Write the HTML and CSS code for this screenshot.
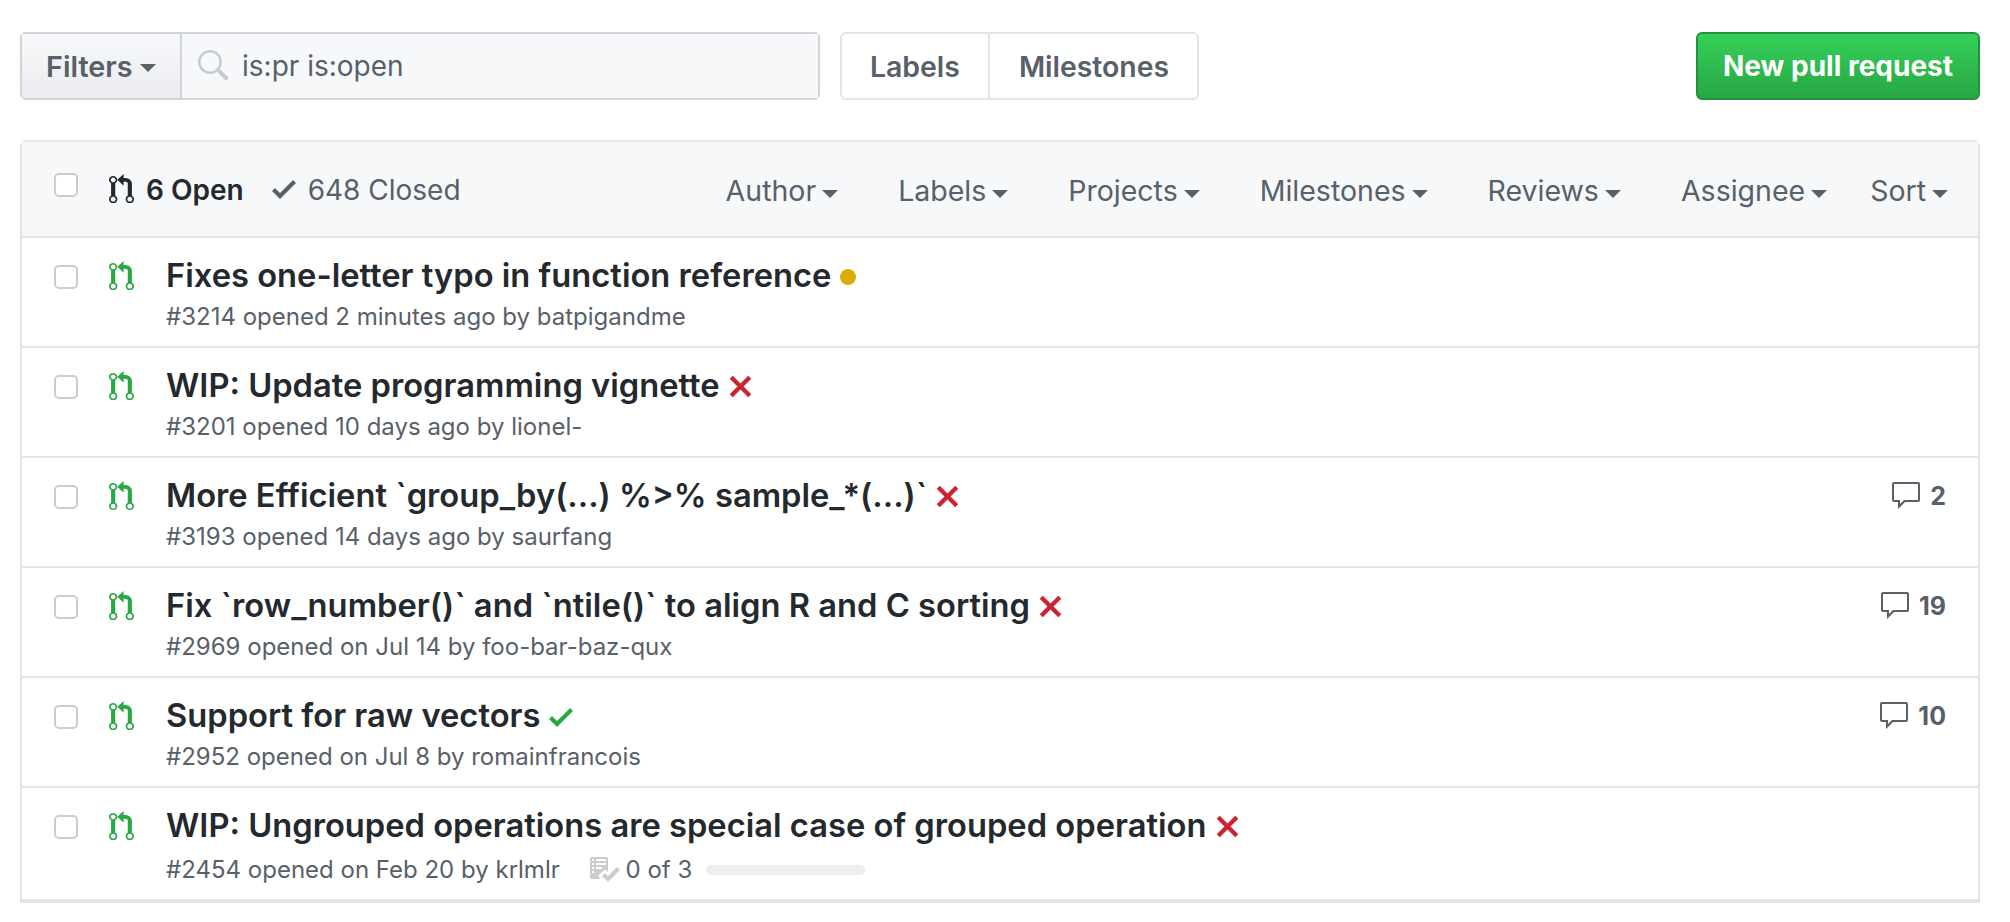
FILE: index.html
```html
<!DOCTYPE html>
<html>
  <head>
    <title>Pull requests</title>
    <link rel="stylesheet" href="styles.css">
  </head>
  <body>
    <svg class="defs" width="0" height="0">
      <symbol id="i-pr" viewBox="0 0 12 16" preserveAspectRatio="none"><path d="M11 11.28V5c-.03-.78-.34-1.47-.94-2.06C9.46 2.35 8.78 2.03 8 2H7V0L4 3l3 3V4h1c.27.02.48.11.69.31.21.2.3.42.31.69v6.28A1.993 1.993 0 0 0 10 15a1.993 1.993 0 0 0 1-3.72zm-1 2.92c-.66 0-1.2-.55-1.2-1.2 0-.65.55-1.2 1.2-1.2.65 0 1.2.55 1.2 1.2 0 .65-.55 1.2-1.2 1.2zM4 3c0-1.11-.89-2-2-2a1.993 1.993 0 0 0-1 3.72v6.56A1.993 1.993 0 0 0 2 15a1.993 1.993 0 0 0 1-3.72V4.72c.59-.34 1-.98 1-1.72zm-.8 10c0 .66-.55 1.2-1.2 1.2-.65 0-1.2-.55-1.2-1.2 0-.65.55-1.2 1.2-1.2.65 0 1.2.55 1.2 1.2zM2 4.2C1.34 4.2.8 3.65.8 3c0-.65.55-1.2 1.2-1.2.65 0 1.2.55 1.2 1.2 0 .65-.55 1.2-1.2 1.2z"/></symbol>
      <symbol id="i-check" viewBox="0 0 12 16"><path d="M12 5l-8 8-4-4 1.5-1.5L4 10l6.5-6.5L12 5z"/></symbol>
      <symbol id="i-x" viewBox="0 0 12 16"><path d="M7.48 8l3.75 3.75-1.48 1.48L6 9.48l-3.75 3.75-1.48-1.48L4.52 8 .77 4.25l1.48-1.48L6 6.52l3.75-3.75 1.48 1.48L7.48 8z"/></symbol>
      <symbol id="i-comment" viewBox="0 0 16 16"><path d="M14 1H2c-.55 0-1 .45-1 1v8c0 .55.45 1 1 1h2v3.5L7.5 11H14c.55 0 1-.45 1-1V2c0-.55-.45-1-1-1zm0 9H7l-2 2v-2H2V2h12v8z"/></symbol>
      <symbol id="i-search" viewBox="0 0 16 16"><path d="M15.7 13.3l-3.81-3.83A5.93 5.93 0 0 0 13 6c0-3.31-2.69-6-6-6S1 2.69 1 6s2.69 6 6 6c1.3 0 2.48-.41 3.47-1.11l3.83 3.81c.19.2.45.3.7.3.25 0 .52-.09.7-.3a.996.996 0 0 0 0-1.41v.01zM7 10.7c-2.59 0-4.7-2.11-4.7-4.7 0-2.59 2.11-4.7 4.7-4.7 2.59 0 4.7 2.11 4.7 4.7 0 2.59-2.11 4.7-4.7 4.7z"/></symbol>
      <symbol id="i-checklist" viewBox="0 0 16 16"><path d="M16 8.5l-6 6-3-3L8.5 10l1.5 1.5L14.5 7 16 8.5zM5.7 12.2l.8.8H2c-.55 0-1-.45-1-1V3c0-.55.45-1 1-1h7c.55 0 1 .45 1 1v6.5l-.8-.8c-.39-.39-1.03-.39-1.42 0L5.7 10.8a.996.996 0 0 0 0 1.41v-.01zM4 4h5V3H4v1zm0 2h5V5H4v1zm0 2h3V7H4v1zM3 9H2v1h1V9zm0-2H2v1h1V7zm0-2H2v1h1V5zm0-2H2v1h1V3z"/></symbol>
    </svg>

    <div class="topbar">
      <div class="search-group">
        <div class="filters">Filters<span class="caret"></span></div>
        <div class="search">
          <svg class="search-icon"><use href="#i-search"/></svg>
          <span>is:pr is:open</span>
        </div>
      </div>
      <div class="nav-links">
        <a class="labels-link">Labels</a>
        <a class="milestones-link">Milestones</a>
      </div>
      <a class="new-pr">New pull request</a>
    </div>

    <div class="box">
      <div class="box-header">
        <span class="checkbox head-check"></span>
        <svg class="pr-icon dark"><use href="#i-pr"/></svg>
        <span class="open-count">6 Open</span>
        <svg class="closed-icon"><use href="#i-check"/></svg>
        <span class="closed-count">648 Closed</span>
        <div class="menus">
          <span class="menu">Author<span class="caret"></span></span>
          <span class="menu">Labels<span class="caret"></span></span>
          <span class="menu">Projects<span class="caret"></span></span>
          <span class="menu">Milestones<span class="caret"></span></span>
          <span class="menu">Reviews<span class="caret"></span></span>
          <span class="menu">Assignee<span class="caret"></span></span>
          <span class="menu sort">Sort<span class="caret"></span></span>
        </div>
      </div>

      <div class="row">
        <span class="checkbox"></span>
        <svg class="pr-icon"><use href="#i-pr"/></svg>
        <div class="row-main">
          <div class="row-title">Fixes one-letter typo in function reference <span class="dot"></span></div>
          <div class="row-meta">#3214 opened 2 minutes ago by batpigandme</div>
        </div>
      </div>

      <div class="row">
        <span class="checkbox"></span>
        <svg class="pr-icon"><use href="#i-pr"/></svg>
        <div class="row-main">
          <div class="row-title">WIP: Update programming vignette <svg class="status red"><use href="#i-x"/></svg></div>
          <div class="row-meta">#3201 opened 10 days ago by lionel-</div>
        </div>
      </div>

      <div class="row">
        <span class="checkbox"></span>
        <svg class="pr-icon"><use href="#i-pr"/></svg>
        <div class="row-main">
          <div class="row-title">More Efficient `group_by(...) %&gt;% sample_*(...)` <svg class="status red"><use href="#i-x"/></svg></div>
          <div class="row-meta">#3193 opened 14 days ago by saurfang</div>
        </div>
        <div class="comments"><svg class="comment-icon"><use href="#i-comment"/></svg>2</div>
      </div>

      <div class="row">
        <span class="checkbox"></span>
        <svg class="pr-icon"><use href="#i-pr"/></svg>
        <div class="row-main">
          <div class="row-title">Fix `row_number()` and `ntile()` to align R and C sorting <svg class="status red"><use href="#i-x"/></svg></div>
          <div class="row-meta">#2969 opened on Jul 14 by foo-bar-baz-qux</div>
        </div>
        <div class="comments"><svg class="comment-icon"><use href="#i-comment"/></svg>19</div>
      </div>

      <div class="row">
        <span class="checkbox"></span>
        <svg class="pr-icon"><use href="#i-pr"/></svg>
        <div class="row-main">
          <div class="row-title">Support for raw vectors <svg class="status green"><use href="#i-check"/></svg></div>
          <div class="row-meta">#2952 opened on Jul 8 by romainfrancois</div>
        </div>
        <div class="comments"><svg class="comment-icon"><use href="#i-comment"/></svg>10</div>
      </div>

      <div class="row">
        <span class="checkbox"></span>
        <svg class="pr-icon"><use href="#i-pr"/></svg>
        <div class="row-main">
          <div class="row-title">WIP: Ungrouped operations are special case of grouped operation <svg class="status red"><use href="#i-x"/></svg></div>
          <div class="row-meta">#2454 opened on Feb 20 by krlmlr
            <span class="tasks"><svg class="task-icon"><use href="#i-checklist"/></svg>0 of 3<span class="task-bar"></span></span>
          </div>
        </div>
      </div>
    </div>
  </body>
</html>
```

FILE: styles.css
```css
html, body {
  height: 100%;
}
body {
  font-family: Inter, "Noto Sans", sans-serif;
  margin: 0;
  padding: 32px 30px 0 20px;
  background: #fff;
  color: #24292e;
  box-sizing: border-box;
  overflow: hidden;
}
.defs {
  position: absolute;
}
.caret {
  display: inline-block;
  margin-left: 6px;
  border: 8px solid transparent;
  border-top-color: currentColor;
  border-bottom: 0;
  vertical-align: 3px;
}

/* top bar */
.topbar {
  display: flex;
  height: 68px;
  font-size: 28.4px;
}
.search-group {
  display: flex;
  width: 800px;
  border: 2px solid #d1d5da;
  border-radius: 6px;
  box-sizing: border-box;
}
.filters {
  display: flex;
  align-items: center;
  width: 160px;
  box-sizing: border-box;
  padding-left: 24px;
  font-size: 28.8px;
  font-weight: 600;
  color: #586069;
  background: linear-gradient(#f6f8fa, #eaecef);
  border-right: 2px solid #d1d5da;
}
.filters .caret {
  margin-top: 3px;
  margin-left: 7px;
  vertical-align: middle;
}
.search {
  flex: 1;
  display: flex;
  align-items: center;
  background: #f6f8fa;
  font-size: 28px;
  color: #586069;
}
.search-icon {
  width: 32px;
  height: 32px;
  margin: 0 14px;
  fill: #c6cbd1;
}
.nav-links {
  display: flex;
  margin-left: 20px;
  border: 2px solid #e1e4e8;
  border-radius: 6px;
  font-weight: 600;
  color: #586069;
}
.nav-links a {
  display: flex;
  align-items: center;
}
.labels-link {
  padding: 0 28px;
  border-right: 2px solid #e1e4e8;
}
.milestones-link {
  padding: 0 28px 0 29px;
}
.new-pr {
  display: flex;
  align-items: center;
  justify-content: center;
  margin-left: auto;
  width: 284px;
  box-sizing: border-box;
  border: 2px solid #23913c;
  border-radius: 6px;
  background: linear-gradient(#34d058, #28a745);
  color: #fff;
  font-size: 28px;
  font-weight: 700;
}

/* issue box */
.box {
  margin-top: 40px;
  border: 2px solid #e1e4e8;
  border-radius: 6px 6px 0 0;
}
.box-header {
  display: flex;
  align-items: center;
  height: 94px;
  background: #f6f8fa;
  border-bottom: 2px solid #e1e4e8;
  font-size: 28px;
  color: #586069;
}
.box-header > span:not(.checkbox), .menus {
  padding-top: 2px;
}
.checkbox {
  flex: none;
  width: 24px;
  height: 24px;
  margin-left: 32px;
  box-sizing: border-box;
  border: 2px solid #c9ccd0;
  border-radius: 5px;
  background: #fff;
}
.head-check {
  margin-top: -8px;
}
.pr-icon {
  flex: none;
  width: 25px;
  height: 31px;
  margin-left: 31px;
  fill: #28a745;
}
.pr-icon.dark {
  fill: #24292e;
}
.open-count {
  margin-left: 12px;
  font-weight: 600;
  color: #24292e;
}
.closed-icon {
  width: 24px;
  height: 32px;
  margin-left: 28px;
  fill: #586069;
}
.closed-count {
  margin-left: 12px;
}
.menus {
  display: flex;
  margin-left: auto;
  padding-right: 30px;
  gap: 60px;
  font-size: 28.5px;
}
.menu.sort {
  margin-left: -17px;
}

/* rows */
.row {
  display: flex;
  align-items: flex-start;
  height: 110px;
  box-sizing: border-box;
  border-bottom: 2px solid #e1e4e8;
}
.row:last-child {
  height: 113px;
}
.row .checkbox {
  margin-top: 27px;
}
.row .pr-icon {
  margin-top: 23px;
}
.row-main {
  margin-left: 32px;
  padding-top: 17px;
}
.row-title {
  font-size: 32.7px;
  line-height: 40px;
  font-weight: 600;
  color: #24292e;
}
.row-meta {
  margin-top: 6px;
  font-size: 24px;
  line-height: 32px;
  color: #586069;
}
.row:last-child .row-meta {
  margin-top: 8px;
}
.dot {
  display: inline-block;
  width: 16px;
  height: 16px;
  border-radius: 50%;
  background: #dbab09;
  vertical-align: 2px;
}
.status {
  width: 25px;
  height: 33px;
  vertical-align: -6px;
}
.status.red {
  fill: #cb2431;
}
.status.green {
  width: 24px;
  height: 32px;
  fill: #28a745;
}
.tasks {
  margin-left: 21px;
}
.task-icon {
  width: 32px;
  height: 32px;
  margin-right: 6px;
  vertical-align: -7px;
  fill: #ccc;
}
.task-bar {
  display: inline-block;
  width: 159px;
  height: 10px;
  margin-left: 14px;
  border-radius: 5px;
  background: #eee;
  vertical-align: 3px;
}
.comments {
  display: flex;
  align-items: center;
  margin-left: auto;
  margin-top: 22px;
  padding-right: 32px;
  font-size: 25px;
  font-weight: 700;
  color: #586069;
}
.comment-icon {
  width: 32px;
  height: 32px;
  margin-right: 8px;
  fill: #586069;
}
```
